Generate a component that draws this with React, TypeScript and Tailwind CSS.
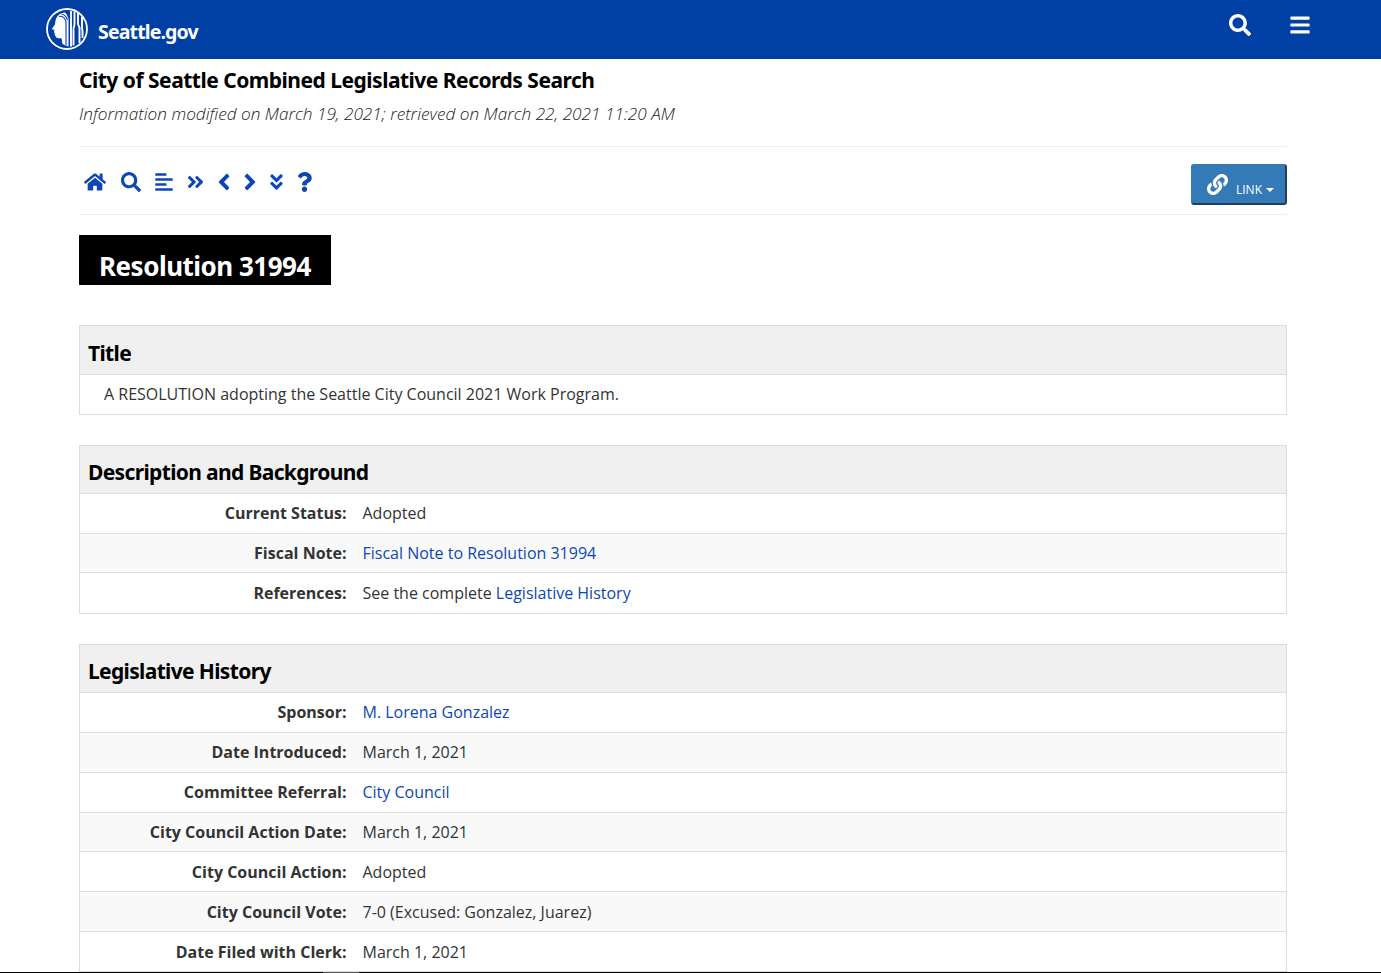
import { FaHome, FaSearch, FaAlignLeft, FaAngleDoubleRight, FaAngleLeft, FaAngleRight, FaAngleDoubleDown, FaQuestion, FaLink, FaBars } from "react-icons/fa"

type Row = { label: string; value: React.ReactNode }

const linkCls = "text-[#0d47b5]"

const descRows: Row[] = [
  { label: "Current Status:", value: "Adopted" },
  { label: "Fiscal Note:", value: <a className={linkCls}>Fiscal Note to Resolution 31994</a> },
  { label: "References:", value: <>See the complete <a className={linkCls}>Legislative History</a></> },
]

const historyRows: Row[] = [
  { label: "Sponsor:", value: <a className={linkCls}>M. Lorena Gonzalez</a> },
  { label: "Date Introduced:", value: "March 1, 2021" },
  { label: "Committee Referral:", value: <a className={linkCls}>City Council</a> },
  { label: "City Council Action Date:", value: "March 1, 2021" },
  { label: "City Council Action:", value: "Adopted" },
  { label: "City Council Vote:", value: "7-0 (Excused: Gonzalez, Juarez)" },
  { label: "Date Filed with Clerk:", value: "March 1, 2021" },
]

function SeattleLogo() {
  return (
    <svg viewBox="0 0 42 42" className="h-[42px] w-[42px]">
      <circle cx="21" cy="21" r="20" fill="none" stroke="#fff" strokeWidth="1.8" />
      {/* face and hair */}
      <path d="M19 4.500c-5 .3-8.500 3.500-9.500 8-.3 1.500-.3 3-.6 4l-3 4.500 2.600 1.300-.6 2.200 1.200.8-.6 1.200 1 1.500c.5 2.500 3.500 2.500 6 2.200l1 5.500c2 1.500 4 2.300 6 2.700V11c-.8-3-1.800-5-3.500-6.500z" fill="#fff" />
      <path d="M13 8.500c3.500-1 6 1.500 7 5v24M15.500 6c3 .5 5 3 6 6" fill="none" stroke="#0040a4" strokeWidth="1.100" />
      <path d="M25 3v35.500M28.500 3.500v13l-1 4v17M32 5v11l1.500 4v15M36 9v11l.5 3v7" fill="none" stroke="#fff" strokeWidth="1.900" />
    </svg>
  )
}

function Section({ title, children, titleCls }: { title: string; children: React.ReactNode; titleCls: string }) {
  return (
    <section className="mb-[30px] border border-[#ddd]">
      <h2 className={`border-b border-[#ddd] bg-[#f0f0f0] pl-2 font-['Noto_Sans',sans-serif] text-[21px] font-bold leading-[33px] tracking-[-0.65px] text-black ${titleCls}`}>
        {title}
      </h2>
      {children}
    </section>
  )
}

function InfoRow({ row, odd, last, rowCls }: { row: Row; odd: boolean; last: boolean; rowCls: string }) {
  return (
    <div className={`flex items-center ${rowCls} ${odd ? "bg-[#f9f9f9]" : "bg-white"} ${last ? "" : "border-b border-[#ddd]"}`}>
      <div className="w-[266.5px] shrink-0 text-right font-bold text-[#333]">{row.label}</div>
      <div className="pl-[16px] text-[#333]">{row.value}</div>
    </div>
  )
}

export default function App() {
  const navIcon = "text-[#0d47b5]"
  return (
    <div className="flex h-[973px] flex-col overflow-hidden bg-white font-['Open_Sans',sans-serif] text-[16px] text-[#333]">
      <header className="flex h-[59px] shrink-0 items-start justify-between bg-[#0040a4]">
        <div className="ml-[46px] mt-[8px] flex items-center">
          <SeattleLogo />
          <span className="ml-[10px] mt-[5px] font-['Noto_Sans',sans-serif] text-[19.5px] font-bold tracking-[-0.85px] text-white">Seattle.gov</span>
        </div>
        <div className="mr-[71px] mt-[14px] flex items-center gap-[39px] text-white">
          <FaSearch className="h-[22px] w-[22px]" />
          <FaBars className="h-[22px] w-[20px]" />
        </div>
      </header>

      <main className="mx-[79px] min-h-0 w-[1208px] flex-1 overflow-hidden">
        <h1 className="mt-[6px] font-['Noto_Sans',sans-serif] text-[21px] font-bold leading-[30px] tracking-[-0.5px] text-black">
          City of Seattle Combined Legislative Records Search
        </h1>
        <p className="mt-[7px] h-[44px] text-[17.2px] font-light italic leading-[24px] text-[#222]">
          Information modified on March 19, 2021; retrieved on March 22, 2021 11:20 AM
        </p>

        <div className="flex h-[69px] items-start justify-between border-y border-[#eee]">
          <div className="ml-[5px] mt-[22px] flex items-center">
            <FaHome className={`h-[22px] w-[22px] ${navIcon}`} />
            <FaSearch className={`ml-[15px] h-[20px] w-[20px] ${navIcon}`} />
            <FaAlignLeft className={`ml-[14px] h-[20px] w-[18px] ${navIcon}`} />
            <FaAngleDoubleRight className={`ml-[14px] h-[20px] w-[17px] ${navIcon}`} />
            <FaAngleLeft className={`ml-[13px] h-[26px] w-[14px] ${navIcon}`} />
            <FaAngleRight className={`ml-[12px] h-[26px] w-[14px] ${navIcon}`} />
            <FaAngleDoubleDown className={`ml-[12px] h-[20px] w-[15px] ${navIcon}`} />
            <FaQuestion className={`ml-[13px] h-[20px] w-[15px] ${navIcon}`} />
          </div>
          <button className="mt-[17px] flex h-[41px] w-[96px] items-center rounded-[3px] border border-b-2 border-r-2 border-[#337ab7] border-b-[#1f3f60] border-r-[#1f3f60] bg-[#337ab7] pl-[15px] text-white">
            <FaLink className="h-[21px] w-[21px]" />
            <span className="ml-[8px] mt-[12px] text-[12px]">LINK</span>
            <span className="ml-[4px] mt-[12px] h-0 w-0 border-x-[4px] border-t-[4px] border-x-transparent border-t-white" />
          </button>
        </div>

        <div className="mt-[20px] h-[50px] w-[252px] bg-black pl-[20px] pt-[9px] font-['Noto_Sans',sans-serif] text-[26px] font-bold leading-[44px] tracking-[-0.5px] text-white">
          Resolution 31994
        </div>

        <div className="mt-[40px]">
          <Section title="Title" titleCls="h-[49px] pt-[11px]">
            <div className="flex h-[39px] items-center pb-[2px] pl-[24px]">A RESOLUTION adopting the Seattle City Council 2021 Work Program.</div>
          </Section>
          <Section title="Description and Background" titleCls="h-[48px] pt-[10px]">
            {descRows.map((r, i) => (
              <InfoRow key={r.label} row={r} rowCls="h-[39.7px]" odd={i % 2 === 1} last={i === descRows.length - 1} />
            ))}
          </Section>
          <Section title="Legislative History" titleCls="h-[48px] pt-[10px]">
            {historyRows.map((r, i) => (
              <InfoRow key={r.label} row={r} rowCls="h-[39.85px]" odd={i % 2 === 1} last={false} />
            ))}
          </Section>
        </div>
      </main>
      <div className="flex h-px shrink-0 bg-black">
        <div className="ml-[323px] w-[36px] bg-[#555]" />
      </div>
    </div>
  )
}
